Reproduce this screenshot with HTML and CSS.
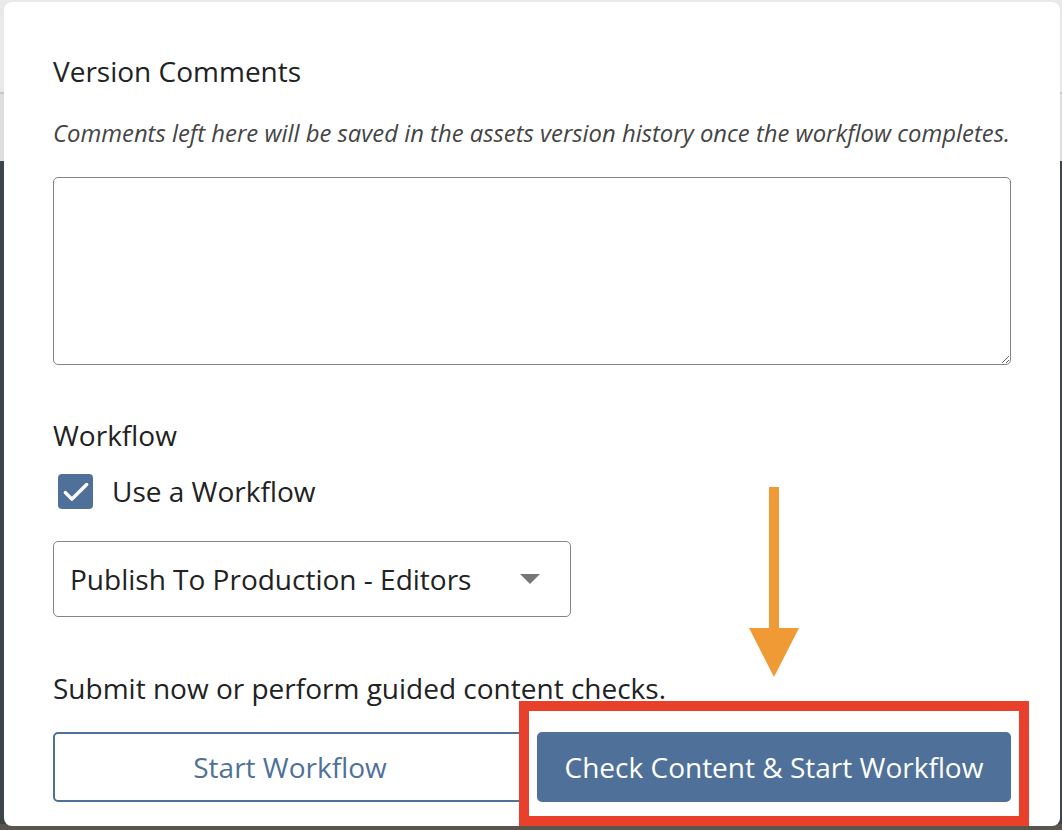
FILE: index.html
```html
<!DOCTYPE html>
<html lang="en">
<head>
  <meta charset="UTF-8" />
  <meta name="viewport" content="width=device-width, initial-scale=1.0"/>
  <title>Start Workflow</title>
  <link rel="stylesheet" href="styles.css">
</head>
<body>
  <div class="backdrop">
    <div class="modal">
      <h2 class="section-title">Version Comments</h2>
      <p class="hint">Comments left here will be saved in the assets version history once the workflow completes.</p>
      <textarea class="comments"></textarea>

      <h2 class="section-title workflow-title">Workflow</h2>
      <label class="check-row">
        <span class="checkbox">
          <svg width="30" height="30" viewBox="0 0 24 24">
            <path d="M3.5 12.5l5.2 5.2L20.5 6" fill="none" stroke="#fff" stroke-width="2.8" stroke-linecap="round" stroke-linejoin="round"/>
          </svg>
        </span>
        Use a Workflow
      </label>

      <div class="select">
        <span>Publish To Production - Editors</span>
        <span class="caret"></span>
      </div>

      <p class="submit-note">Submit now or perform guided content checks.</p>

      <div class="actions">
        <button class="btn btn-outline">Start Workflow</button>
        <button class="btn btn-primary">Check Content &amp; Start Workflow</button>
      </div>

      <!-- annotation overlays -->
      <div class="arrow">
        <span class="shaft"></span>
        <span class="head"></span>
      </div>
      <div class="highlight"></div>
    </div>
  </div>
</body>
</html>
```

FILE: styles.css
```css
* {
  box-sizing: border-box;
}

body {
  margin: 0;
  font-family: 'Open Sans', sans-serif;
  color: #222;
  background: linear-gradient(to bottom,
    #e9e9e9 0, #e9e9e9 92px,
    #c9c9c9 92px, #c9c9c9 94px,
    #dedede 94px, #dedede 161px,
    #3d4549 161px, #3d4549 824px,
    #5a544f 824px);
  height: 830px;
  overflow: hidden;
}

.backdrop {
  padding: 2px 2px 0 4px;
}

.modal {
  position: relative;
  background: #fff;
  border-radius: 8px;
  height: 824px;
  padding: 52px 49px 0 49px;
}

.section-title {
  font-size: 28px;
  font-weight: 400;
  line-height: 34px;
  margin: 0;
  color: #222;
}

.hint {
  font-size: 23.85px;
  font-style: italic;
  color: #444;
  line-height: 30px;
  margin: 30px 0 0;
  white-space: nowrap;
}

.comments {
  display: block;
  width: 100%;
  height: 188px;
  margin-top: 29px;
  border: 1.5px solid #858589;
  border-radius: 5px;
  resize: vertical;
  font-family: inherit;
}

.workflow-title {
  margin-top: 53px;
}

.check-row {
  display: flex;
  align-items: center;
  gap: 19px;
  margin-top: 22px;
  margin-left: 5px;
  font-size: 28px;
  line-height: 35px;
}

.checkbox {
  width: 35px;
  height: 35px;
  border-radius: 4px;
  background: #4f7199;
  display: flex;
  align-items: center;
  justify-content: center;
}

.select {
  display: flex;
  align-items: center;
  justify-content: space-between;
  width: 518px;
  height: 76px;
  margin-top: 32px;
  padding: 0 30px 0 16px;
  border: 1.5px solid #858589;
  border-radius: 5px;
  font-size: 28px;
}

.caret {
  width: 0;
  height: 0;
  border-left: 10px solid transparent;
  border-right: 10px solid transparent;
  border-top: 10px solid #777;
}

.submit-note {
  font-size: 28px;
  line-height: 34px;
  margin: 54px 0 0;
}

.actions {
  display: flex;
  gap: 10px;
  margin-top: 27px;
}

.btn {
  flex: 1;
  height: 70px;
  border-radius: 5px;
  font-family: inherit;
  font-size: 28px;
  cursor: pointer;
}

.btn-outline {
  background: #fff;
  color: #4f7199;
  border: 2px solid #4f7199;
}

.btn-primary {
  background: #4f7199;
  color: #fff;
  border: 2px solid #4f7199;
}

.arrow {
  position: absolute;
  left: 745px;
  top: 485px;
  width: 50px;
  display: flex;
  flex-direction: column;
  align-items: center;
}

.shaft {
  width: 10px;
  height: 141px;
  background: #f09a36;
}

.head {
  width: 0;
  height: 0;
  border-left: 25px solid transparent;
  border-right: 25px solid transparent;
  border-top: 49px solid #f09a36;
}

.highlight {
  position: absolute;
  left: 515px;
  top: 699px;
  width: 510px;
  height: 125px;
  border: 10px solid #e8402a;
}
```
